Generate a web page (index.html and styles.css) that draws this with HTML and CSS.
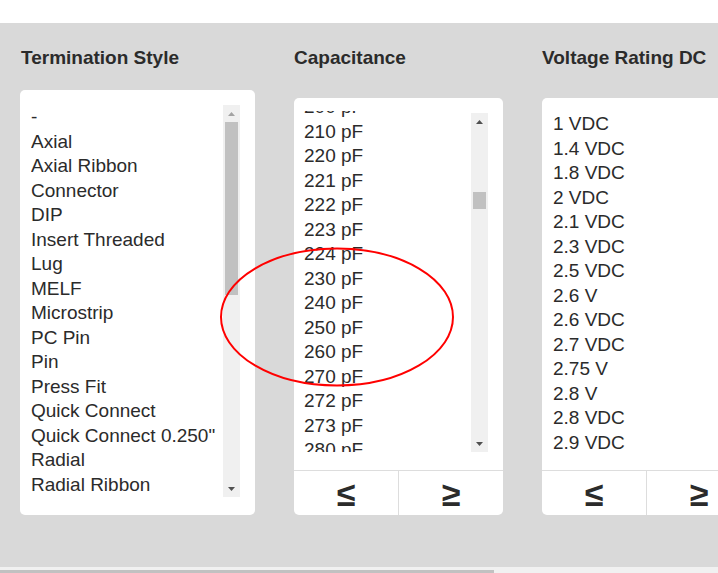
FILE: index.html
```html
<!DOCTYPE html>
<html>
<head>
<meta charset="utf-8">
<link rel="stylesheet" href="styles.css">
</head>
<body>
<div class="topbar"></div>
<div class="main">
  <div class="col col-wide">
    <h2 class="heading heading-first">Termination Style</h2>
    <div class="card card-tall">
      <div class="viewport viewport-tall">
        <div class="items items-first">
          <div class="item">-</div>
          <div class="item">Axial</div>
          <div class="item">Axial Ribbon</div>
          <div class="item">Connector</div>
          <div class="item">DIP</div>
          <div class="item">Insert Threaded</div>
          <div class="item">Lug</div>
          <div class="item">MELF</div>
          <div class="item">Microstrip</div>
          <div class="item">PC Pin</div>
          <div class="item">Pin</div>
          <div class="item">Press Fit</div>
          <div class="item">Quick Connect</div>
          <div class="item">Quick Connect 0.250"</div>
          <div class="item">Radial</div>
          <div class="item">Radial Ribbon</div>
          <div class="item">Screw</div>
        </div>
      </div>
      <div class="vscroll">
        <div class="sbtn"><svg width="7" height="4" viewBox="0 0 7 4"><polygon points="0,4 7,4 3.5,0" fill="#a3a3a3"/></svg></div>
        <div class="track"><div class="thumb" style="margin-top:0px;height:173px"></div></div>
        <div class="sbtn"><svg width="7" height="4" viewBox="0 0 7 4"><polygon points="0,0 7,0 3.5,4" fill="#505050"/></svg></div>
      </div>
    </div>
  </div>

  <div class="col">
    <h2 class="heading">Capacitance</h2>
    <div class="card card-btns">
      <div class="listarea">
        <div class="viewport">
          <div class="items items-scrolled">
            <div class="item">200 pF</div>
            <div class="item">210 pF</div>
            <div class="item">220 pF</div>
            <div class="item">221 pF</div>
            <div class="item">222 pF</div>
            <div class="item">223 pF</div>
            <div class="item">224 pF</div>
            <div class="item">230 pF</div>
            <div class="item">240 pF</div>
            <div class="item">250 pF</div>
            <div class="item">260 pF</div>
            <div class="item">270 pF</div>
            <div class="item">272 pF</div>
            <div class="item">273 pF</div>
            <div class="item">280 pF</div>
            <div class="item">300 pF</div>
          </div>
        </div>
        <div class="vscroll">
          <div class="sbtn"><svg width="7" height="4" viewBox="0 0 7 4"><polygon points="0,4 7,4 3.5,0" fill="#505050"/></svg></div>
          <div class="track"><div class="thumb" style="margin-top:62px;height:17px"></div></div>
          <div class="sbtn"><svg width="7" height="4" viewBox="0 0 7 4"><polygon points="0,0 7,0 3.5,4" fill="#505050"/></svg></div>
        </div>
      </div>
      <div class="btnrow">
        <div class="cmp">≤</div>
        <div class="cmp cmp-right">≥</div>
      </div>
    </div>
  </div>

  <div class="col">
    <h2 class="heading">Voltage Rating DC</h2>
    <div class="card card-btns">
      <div class="listarea listarea-third">
        <div class="viewport">
          <div class="items items-third">
            <div class="item">1 VDC</div>
            <div class="item">1.4 VDC</div>
            <div class="item">1.8 VDC</div>
            <div class="item">2 VDC</div>
            <div class="item">2.1 VDC</div>
            <div class="item">2.3 VDC</div>
            <div class="item">2.5 VDC</div>
            <div class="item">2.6 V</div>
            <div class="item">2.6 VDC</div>
            <div class="item">2.7 VDC</div>
            <div class="item">2.75 V</div>
            <div class="item">2.8 V</div>
            <div class="item">2.8 VDC</div>
            <div class="item">2.9 VDC</div>
            <div class="item">3 VDC</div>
          </div>
        </div>
        <div class="vscroll">
          <div class="sbtn"><svg width="7" height="4" viewBox="0 0 7 4"><polygon points="0,4 7,4 3.5,0" fill="#a3a3a3"/></svg></div>
          <div class="track"><div class="thumb" style="margin-top:0px;height:60px"></div></div>
          <div class="sbtn"><svg width="7" height="4" viewBox="0 0 7 4"><polygon points="0,0 7,0 3.5,4" fill="#505050"/></svg></div>
        </div>
      </div>
      <div class="btnrow">
        <div class="cmp">≤</div>
        <div class="cmp cmp-right">≥</div>
      </div>
    </div>
  </div>

  <svg class="circle" width="238" height="142" viewBox="0 0 238 142">
    <ellipse cx="119" cy="71" rx="116" ry="68.5" fill="none" stroke="#ff0000" stroke-width="2"/>
  </svg>
</div>
<div class="hscroll"><div class="hthumb"></div></div>
</body>
</html>
```

FILE: styles.css
```css
* { box-sizing: border-box; }

html, body {
  margin: 0;
  padding: 0;
  width: 718px;
  height: 573px;
  overflow: hidden;
  background: #ffffff;
  font-family: "Liberation Sans", Arial, sans-serif;
  color: #2b2b2b;
}

.topbar {
  height: 23px;
  background: #ffffff;
}

.main {
  position: relative;
  height: 544px;
  background: #d9d9d9;
  display: flex;
  align-items: flex-start;
  gap: 39px;
  padding: 24px 0 0 20px;
  overflow: hidden;
}

.col {
  flex: 0 0 209px;
  width: 209px;
}

.col-wide {
  flex: 0 0 235px;
  width: 235px;
}

.heading {
  margin: 0 0 29px 0;
  font-size: 19px;
  line-height: 22px;
  font-weight: bold;
  color: #2b2b2b;
  white-space: nowrap;
}

.heading-first {
  margin-bottom: 21px;
  padding-left: 1px;
}

.card {
  background: #ffffff;
  border-radius: 5px;
}

.card-tall {
  height: 425px;
  display: flex;
  padding: 15px 15px 18px 11px;
}

.viewport {
  flex: 1;
  height: 341px;
  overflow: hidden;
}

.viewport-tall {
  height: 392px;
}

.items {
  font-size: 19px;
  line-height: 24.5px;
  white-space: nowrap;
}

.items-first {
  margin-top: 0px;
}

.items-scrolled {
  margin-top: -16px;
}

.items-third {
  margin-top: 1px;
}

.vscroll {
  flex: 0 0 17px;
  width: 17px;
  background: #f0f0f0;
  display: flex;
  flex-direction: column;
}

.sbtn {
  height: 17px;
  display: flex;
  align-items: center;
  justify-content: center;
}

.sbtn svg {
  display: block;
}

.track {
  flex: 1;
  padding: 0 2px;
}

.thumb {
  background: #c1c1c1;
}

.card-btns {
  height: 417px;
  display: flex;
  flex-direction: column;
}

.listarea {
  display: flex;
  height: 372px;
  padding: 13px 15px 18px 10px;
}

.listarea-third {
  padding-left: 11px;
}

.listarea .vscroll {
  height: 339px;
  margin-top: 2px;
}

.btnrow {
  flex: 1;
  display: flex;
  border-top: 1px solid #dddddd;
}

.cmp {
  flex: 1;
  display: flex;
  align-items: center;
  justify-content: center;
  font-size: 34px;
  line-height: 40px;
  font-weight: bold;
  color: #2b2b2b;
  padding-top: 2px;
}

.cmp-right {
  border-left: 1px solid #dddddd;
}

.circle {
  position: absolute;
  left: 218px;
  top: 223px;
}

.hscroll {
  height: 6px;
  background: #f1f1f1;
  padding-top: 3px;
}

.hthumb {
  width: 494px;
  height: 3px;
  background: #c1c1c1;
}
```
